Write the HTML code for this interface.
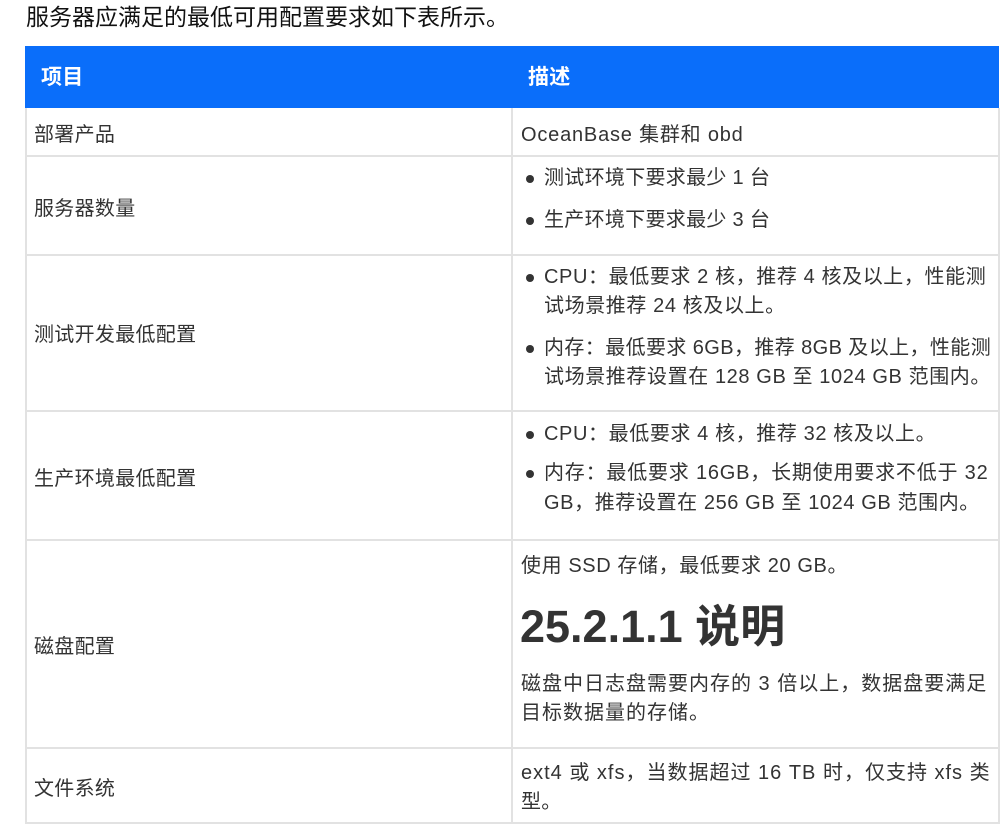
<!DOCTYPE html>
<html><head><meta charset="utf-8"><style>
body{margin:0;width:1008px;height:831px;background:#fff;position:relative;overflow:hidden;font-family:"Liberation Sans","Noto Sans CJK SC",sans-serif;color:#333}
.t{position:absolute;white-space:nowrap;font-size:20px;line-height:24px;letter-spacing:0.3px}
.h{position:absolute;background:#e2e2e2}
.d{position:absolute;width:8px;height:8px;border-radius:50%;background:#333}
</style></head><body>
<div class="t" style="left:26px;top:3px;font-size:23px;line-height:28px;color:#111;letter-spacing:0">服务器应满足的最低可用配置要求如下表所示。</div>
<div style="position:absolute;left:25px;top:46px;width:974px;height:62px;background:#0a6efa"></div>
<div class="t" style="left:41px;top:66px;color:#fff;font-weight:bold;font-size:21px">项目</div>
<div class="t" style="left:528px;top:66px;color:#fff;font-weight:bold;font-size:21px">描述</div>
<div class="h" style="left:25px;top:108px;width:2px;height:716px"></div>
<div class="h" style="left:511px;top:108px;width:2px;height:716px"></div>
<div class="h" style="left:998px;top:108px;width:2px;height:716px"></div>
<div class="h" style="left:25px;top:155px;width:975px;height:2px"></div>
<div class="h" style="left:25px;top:254px;width:975px;height:2px"></div>
<div class="h" style="left:25px;top:410px;width:975px;height:2px"></div>
<div class="h" style="left:25px;top:539px;width:975px;height:2px"></div>
<div class="h" style="left:25px;top:747px;width:975px;height:2px"></div>
<div class="h" style="left:25px;top:822px;width:975px;height:2px"></div>
<div class="t" style="left:34px;top:123px">部署产品</div>
<div class="t" style="left:34px;top:197px">服务器数量</div>
<div class="t" style="left:34px;top:323px">测试开发最低配置</div>
<div class="t" style="left:34px;top:467px">生产环境最低配置</div>
<div class="t" style="left:34px;top:635px">磁盘配置</div>
<div class="t" style="left:34px;top:777px">文件系统</div>
<div class="t" style="left:521px;top:123px;letter-spacing:0.8px">OceanBase 集群和 obd</div>
<div class="d" style="left:526px;top:175px"></div><div class="t" style="left:544px;top:166px">测试环境下要求最少 1 台</div>
<div class="d" style="left:526px;top:217px"></div><div class="t" style="left:544px;top:208px">生产环境下要求最少 3 台</div>
<div class="d" style="left:526px;top:274px"></div><div class="t" style="left:544px;top:265px;letter-spacing:0.6px">CPU：最低要求 2 核，推荐 4 核及以上，性能测</div>
<div class="t" style="left:544px;top:294px;letter-spacing:0.6px">试场景推荐 24 核及以上。</div>
<div class="d" style="left:526px;top:345px"></div><div class="t" style="left:544px;top:336px;letter-spacing:0.4px">内存：最低要求 6GB，推荐 8GB 及以上，性能测</div>
<div class="t" style="left:544px;top:365px;letter-spacing:0.6px">试场景推荐设置在 128 GB 至 1024 GB 范围内。</div>
<div class="d" style="left:526px;top:431px"></div><div class="t" style="left:544px;top:422px;letter-spacing:0.6px">CPU：最低要求 4 核，推荐 32 核及以上。</div>
<div class="d" style="left:526px;top:470px"></div><div class="t" style="left:544px;top:461px;letter-spacing:0.8px">内存：最低要求 16GB，长期使用要求不低于 32</div>
<div class="t" style="left:544px;top:491px;letter-spacing:0.6px">GB，推荐设置在 256 GB 至 1024 GB 范围内。</div>
<div class="t" style="left:521px;top:554px;letter-spacing:0.6px">使用 SSD 存储，最低要求 20 GB。</div>
<div class="t" style="left:520px;top:599px;font-size:45px;line-height:56px;font-weight:bold;letter-spacing:0">25.2.1.1 说明</div>
<div class="t" style="left:521px;top:672px;letter-spacing:1px">磁盘中日志盘需要内存的 3 倍以上，数据盘要满足</div>
<div class="t" style="left:521px;top:701px;letter-spacing:1px">目标数据量的存储。</div>
<div class="t" style="left:521px;top:761px;letter-spacing:1px">ext4 或 xfs，当数据超过 16 TB 时，仅支持 xfs 类</div>
<div class="t" style="left:521px;top:790px">型。</div>
</body></html>
